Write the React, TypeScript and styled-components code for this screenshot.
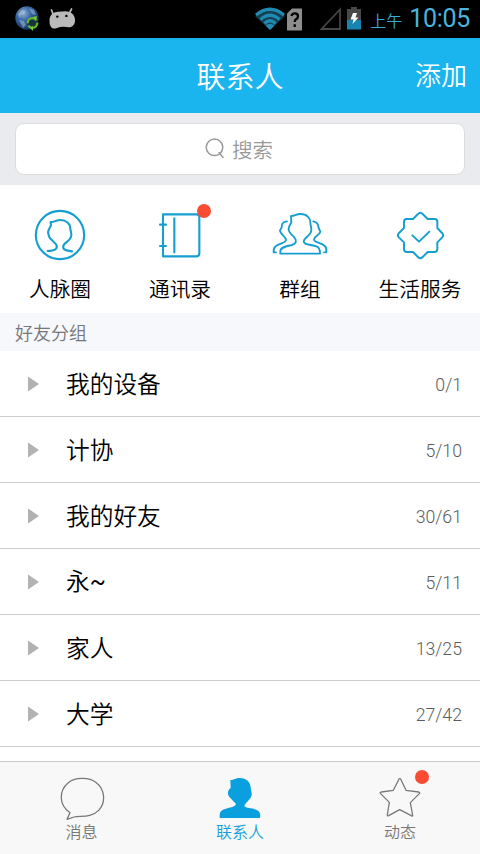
import React from "react";
import styled, { createGlobalStyle } from "styled-components";

const cjk = '"Noto Sans CJK SC", sans-serif';
const latin = 'Roboto, "Noto Sans CJK SC", sans-serif';
const line = "#159fd0";

const Global = createGlobalStyle`
  * { box-sizing: border-box; }
  body { margin: 0; background: #fff; font-family: ${cjk}; }
`;

const Screen = styled.div`
  width: 480px;
  height: 854px;
  display: flex;
  flex-direction: column;
  background: #fff;
  overflow: hidden;
`;

const StatusBar = styled.div`
  height: 38px;
  flex: none;
  background: #000;
  display: flex;
  align-items: center;
  justify-content: space-between;
  padding: 0 10px 0 13px;
`;

const StatusGroup = styled.div`
  display: flex;
  align-items: center;
  height: 38px;
`;

const NotificationGroup = styled(StatusGroup)`
  gap: 10px;
`;

const Period = styled.span`
  font: 350 16px/20px ${cjk};
  color: #35a9d8;
  margin: 1px 7px 0 0;
`;

const Clock = styled.span`
  font: 400 25px/38px ${latin};
  letter-spacing: -0.3px;
  color: #4bb4de;
`;

const Header = styled.header`
  height: 75px;
  flex: none;
  background: #1ab4ee;
  color: #fff;
  display: grid;
  grid-template-columns: 1fr auto 1fr;
  align-items: center;
  padding: 0 13px 2px;
`;

const Title = styled.h1`
  grid-column: 2;
  margin: 0;
  font: 350 29px/40px ${cjk};
`;

const AddAction = styled.button`
  justify-self: end;
  border: 0;
  padding: 0;
  margin-bottom: 2px;
  background: none;
  color: #fff;
  font: 350 26px/40px ${cjk};
`;

const SearchArea = styled.div`
  height: 72px;
  flex: none;
  padding: 10px 15px;
  background: #e9ebee;
`;

const SearchBox = styled.div`
  height: 52px;
  border: 1px solid #dcddda;
  border-radius: 9px;
  background: #fff;
  display: flex;
  justify-content: center;
  align-items: center;
  gap: 7px;
  padding-right: 2px;
  color: #999;
  font: 350 20.5px/30px ${cjk};
`;

const Shortcuts = styled.nav`
  height: 128px;
  flex: none;
  display: grid;
  grid-template-columns: repeat(4, 1fr);
  padding-top: 20px;
`;

const Shortcut = styled.div`
  display: flex;
  flex-direction: column;
  align-items: center;
  font: 350 20.7px/30px ${cjk};
  color: #000;
`;

const IconSlot = styled.div`
  position: relative;
  display: flex;
  margin-bottom: 8px;
`;

const Badge = styled.span<{ $top: number; $right: number }>`
  position: absolute;
  top: ${(p) => p.$top}px;
  right: ${(p) => p.$right}px;
  width: 14px;
  height: 14px;
  border-radius: 50%;
  background: #fa4b33;
`;

const SectionTitle = styled.h2`
  height: 38px;
  flex: none;
  margin: 0;
  padding-left: 15px;
  background: #f7f8fb;
  color: #777;
  font: 350 18px/38px ${cjk};
`;

const GroupList = styled.div`
  flex: 1;
`;

const GroupRow = styled.div`
  height: 66px;
  display: flex;
  align-items: center;
  padding: 0 18px 0 28px;
  border-bottom: 1px solid #ccc;
`;

const GroupName = styled.span`
  flex: 1;
  margin: 0 0 2px 27px;
  font: 350 23.7px/34px ${cjk};
  color: #000;
`;

const Tilde = styled.span`
  font-family: Roboto, sans-serif;
  font-weight: 400;
`;

const Count = styled.span`
  font: 350 17.7px/24px ${latin};
  color: #5c5c5c;
  margin-top: 3px;
`;

const TabBar = styled.nav`
  height: 93px;
  flex: none;
  display: grid;
  grid-template-columns: repeat(3, 1fr);
  border-top: 1px solid #c9c9c9;
  background: #f8f8f8;
`;

const Tab = styled.div<{ $active?: boolean; $shift?: number }>`
  display: flex;
  flex-direction: column;
  align-items: center;
  padding: 12px 0 0 ${(p) => p.$shift || 0}px;
  color: ${(p) => (p.$active ? "#159fdc" : "#777")};
  font: 350 16px/24px ${cjk};
`;

const TabIcon = styled.div`
  position: relative;
  display: flex;
  height: 45px;
`;

const stroke = {
  fill: "none",
  stroke: line,
  strokeWidth: 6.3,
  strokeLinecap: "round" as const,
  strokeLinejoin: "round" as const,
};

const CircleIcon = () => (
  <svg width="60" height="60" viewBox="90 45 180 180" {...stroke}>
    <circle cx="180" cy="135" r="72.5" />
    <path d="M143 183C164 182 172 178 170 166C167 158 151 151 147 139L145 131C141 121 151 113 153 106L152 96C163 97 168 90 181 90C199 90 211 101 211 116C211 125 218 131 212 143C207 155 193 158 190 167C187 179 197 182 216 184" />
  </svg>
);

const BookIcon = () => (
  <svg width="60" height="60" viewBox="450 45 180 180" {...stroke}>
    <path d="M489 73H590Q598 73 598 82V190Q598 199 589 199H489ZM523 85V187M480 104H498M480 168H498" />
  </svg>
);

const GroupIcon = () => (
  <svg width="60" height="60" viewBox="90 45 180 180" {...stroke} strokeWidth={5.6}>
    <path d="M121 191V184C121 171 139 169 156 165C170 161 171 151 161 140C152 132 144 123 146 115C148 108 150 103 154 98L153 78C163 79 168 72 181 72C201 72 211 84 211 98C211 107 217 115 213 126C209 137 193 143 191 154C191 166 215 163 231 170C239 173 240 181 240 191Z" />
    <path d="M141 94C125 96 126 104 125 112L120 121C120 133 137 139 138 149C139 159 119 160 108 168C99 174 101 182 101 187H108M220 94C234 97 234 105 236 114L241 125C238 136 223 139 222 148C221 157 242 158 252 166C262 173 259 182 259 187H252" />
  </svg>
);

const ServiceIcon = () => (
  <svg width="60" height="60" viewBox="450 45 180 180" {...stroke} strokeWidth={5.8}>
    <path d="M534 72Q541 65 548 72L563 87H584Q592 87 592 95V114L606 129Q613 136 606 143L592 157V177Q592 186 583 186H563L548 201Q541 208 534 201L519 186H501Q492 186 492 177V157L477 143Q470 136 477 129L492 114V95Q492 87 500 87H519Z" />
    <path d="M517 136L537 155L568 125" />
  </svg>
);

const SearchIcon = () => (
  <svg width="20" height="22" viewBox="0 0 20 22" fill="none" stroke="#999" strokeWidth="1.5" strokeLinecap="round">
    <circle cx="9.5" cy="9.3" r="8.3" />
    <path d="M14 14.5L18 19.5" />
  </svg>
);

const Arrow = () => (
  <svg width="11" height="16" viewBox="0 0 11 16">
    <path d="M0 .5L11 8L0 15.5Z" fill="#b2b2b2" />
  </svg>
);

const ChatIcon = () => (
  <svg width="46" height="46" viewBox="174 102 138 138" fill="none" stroke="#777" strokeWidth="3.8" strokeLinejoin="round">
    <path d="M207 218C171 194 175 151 201 129C220 112 263 110 286 128C311 147 316 187 293 211C271 234 239 227 219 231L198 238Z" />
  </svg>
);

const PersonIcon = () => (
  <svg width="46" height="46" viewBox="-69 102 138 138">
    <path fill="#0aa0e0" d="M-61 234V223C-59 207-40 206-23 201C-13 197-11 193-14 190L-32 171C-36 165-38 159-34 150L-28 143L-29 120C-16 120-15 114 0 114C19 114 32 127 32 143C34 154 37 162 34 169C29 181 16 189 13 198C18 207 45 202 56 214C62 220 61 228 60 234Z" />
  </svg>
);

const StarIcon = () => (
  <svg width="46" height="46" viewBox="412 102 138 138" fill="none" stroke="#777" strokeWidth="3.8" strokeLinejoin="round">
    <path d="M480 116Q482 115 484 119L499 151L537 156Q543 158 539 161L512 188L519 226Q519 230 515 227L480 209L447 227Q443 229 443 224L449 187L422 160Q420 157 425 156L461 151L477 119Q478 116 480 116Z" />
  </svg>
);

const GlobeIcon = () => (
  <svg width="26" height="26" viewBox="0 0 26 26">
    <defs>
      <radialGradient id="globe" cx="35%" cy="30%" r="75%">
        <stop offset="0" stopColor="#8fadd2" />
        <stop offset=".45" stopColor="#32629f" />
        <stop offset="1" stopColor="#123360" />
      </radialGradient>
    </defs>
    <circle cx="14" cy="12" r="11.7" fill="url(#globe)" />
    <path d="M5 8L9 4L13 5L11 8L8 9L7 12ZM16 2L21 4L23 9L19 8ZM6 14L11 15L13 19L10 22Z" fill="#b5c6d9" opacity=".5" />
    <circle cx="19.5" cy="17" r="4.8" fill="#18343a" stroke="#65b92b" strokeWidth="2.3" strokeDasharray="12 2.5" />
    <path d="M17 22L20 20V25ZM20 11L24 10L23 14Z" fill="#78c93b" />
  </svg>
);

const AndroidIcon = () => (
  <svg width="28" height="22" viewBox="0 0 28 22">
    <path d="M4 6L2.500 2M20.500 5L22.500 1" stroke="#b6b6b6" strokeWidth="1.7" strokeLinecap="round" />
    <path d="M5 4.500Q9 3.500 13 3.500Q17 2.500 21 4.200Q25 6 26 11Q26.500 17 22 19Q19 19.500 15 18.700Q11 18.500 8 20Q4 21.500 2 19Q0 16 .5 11Q1.500 6 5 4.500Z" fill="#bababa" />
    <circle cx="8.3" cy="8.6" r="1.2" />
    <circle cx="17.4" cy="7.9" r="1.2" />
  </svg>
);

const SignalIcons = () => (
  <svg width="115" height="30" viewBox="0 0 115 30">
    <path d="M0 12Q15 0 30 12L15 26Z" fill="#153e50" />
    <path d="M1 11Q15-.5 29 11M5.500 15.500Q15 7 24.500 15.500M9.500 19.500Q15 14 20.500 19.500" stroke="#1f8bb3" strokeWidth="3.2" fill="none" />
    <path d="M10.500 21.500Q15 18 19.500 21.500L15 26Z" fill="#1f8bb3" />
    <path d="M37 4.500H47V26.500H32V9.500Z" fill="#8d8d8d" />
    <path d="M36.500 12Q37 9.300 39.700 9.300Q43 9.300 43 12.300Q43 14.200 41 15.300Q39.700 16.200 39.700 18M39.700 20.200V23" stroke="#000" strokeWidth="2.3" fill="none" />
    <path d="M66.500 25L85 5.500V25Z" fill="none" stroke="#454545" strokeWidth="1.8" />
    <path d="M92 5H96V3H102V5H106V17H92Z" fill="#484848" />
    <path d="M92 16H106V25.500H92Z" fill="#1785b0" />
    <path d="M98 9H102L100.500 13.500H103.500L97.500 20L98.500 15.500H95.500Z" fill="#fff" />
  </svg>
);

const shortcuts = [
  { label: "人脉圈", icon: <CircleIcon /> },
  { label: "通讯录", icon: <BookIcon />, badge: true },
  { label: "群组", icon: <GroupIcon /> },
  { label: "生活服务", icon: <ServiceIcon /> },
];

const groups = [
  { id: "devices", name: "我的设备", count: "0/1" },
  { id: "club", name: "计协", count: "5/10" },
  { id: "friends", name: "我的好友", count: "30/61" },
  { id: "yong", name: <>永<Tilde>~</Tilde></>, count: "5/11" },
  { id: "family", name: "家人", count: "13/25" },
  { id: "college", name: "大学", count: "27/42" },
];

export default function App() {
  return (
    <>
      <Global />
      <Screen>
        <StatusBar>
          <NotificationGroup>
            <GlobeIcon />
            <AndroidIcon />
          </NotificationGroup>
          <StatusGroup>
            <SignalIcons />
            <Period>上午</Period>
            <Clock>10:05</Clock>
          </StatusGroup>
        </StatusBar>
        <Header>
          <Title>联系人</Title>
          <AddAction>添加</AddAction>
        </Header>
        <SearchArea>
          <SearchBox>
            <SearchIcon />
            <span>搜索</span>
          </SearchBox>
        </SearchArea>
        <Shortcuts>
          {shortcuts.map((s) => (
            <Shortcut key={s.label}>
              <IconSlot>
                {s.icon}
                {s.badge && <Badge $top={-1} $right={-1} />}
              </IconSlot>
              {s.label}
            </Shortcut>
          ))}
        </Shortcuts>
        <SectionTitle>好友分组</SectionTitle>
        <GroupList>
          {groups.map((g) => (
            <GroupRow key={g.id}>
              <Arrow />
              <GroupName>{g.name}</GroupName>
              <Count>{g.count}</Count>
            </GroupRow>
          ))}
        </GroupList>
        <TabBar>
          <Tab $shift={3}>
            <TabIcon><ChatIcon /></TabIcon>
            消息
          </Tab>
          <Tab $active>
            <TabIcon><PersonIcon /></TabIcon>
            联系人
          </Tab>
          <Tab>
            <TabIcon>
              <StarIcon />
              <Badge $top={-4} $right={-6} />
            </TabIcon>
            动态
          </Tab>
        </TabBar>
      </Screen>
    </>
  );
}
